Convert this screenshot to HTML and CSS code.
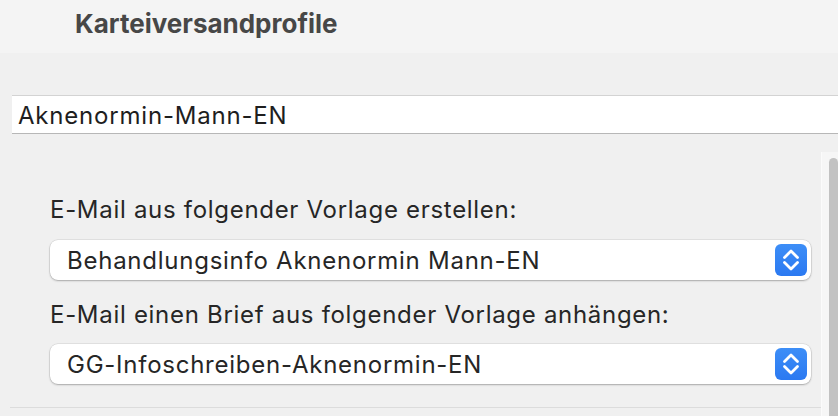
FILE: index.html
```html
<!DOCTYPE html>
<html lang="de">
<head>
    <meta charset="UTF-8">
    <title>Karteiversandprofile</title>
    <link rel="stylesheet" href="styles.css">
</head>
<body>
    <div class="header">
        <h1>Karteiversandprofile</h1>
    </div>

    <div class="main">
        <div class="name-field">Aknenormin-Mann-EN</div>

        <div class="panel">
            <div class="form">
                <div class="label">E-Mail aus folgender Vorlage erstellen:</div>
                <div class="popup">
                    <span>Behandlungsinfo Aknenormin Mann-EN</span>
                    <span class="stepper">
                        <svg viewBox="0 0 32 32" width="32" height="32"><path d="M9.5 13.5 L16 7 L22.5 13.5 M9.5 18.5 L16 25 L22.5 18.5" /></svg>
                    </span>
                </div>

                <div class="label second">E-Mail einen Brief aus folgender Vorlage anhängen:</div>
                <div class="popup">
                    <span>GG-Infoschreiben-Aknenormin-EN</span>
                    <span class="stepper">
                        <svg viewBox="0 0 32 32" width="32" height="32"><path d="M9.5 13.5 L16 7 L22.5 13.5 M9.5 18.5 L16 25 L22.5 18.5" /></svg>
                    </span>
                </div>

                <div class="separator"></div>
            </div>
            <div class="scroller">
                <div class="thumb"></div>
            </div>
        </div>
    </div>
</body>
</html>
```

FILE: styles.css
```css
body {
    margin: 0;
    font-family: Inter, "Liberation Sans", sans-serif;
    color: #262626;
    background: #f0f0f0;
    overflow: hidden;
}
.header {
    height: 53px;
    background: #f4f4f4;
    padding-left: 75px;
    box-sizing: border-box;
}
h1 {
    margin: 0;
    padding-top: 9px;
    font-size: 26px;
    line-height: 30px;
    font-weight: 700;
    color: #474747;
}
.main {
    background: #f0f0f0;
    padding-top: 42px;
}
.name-field {
    margin-left: 12px;
    height: 37px;
    background: white;
    border-top: 1px solid #d3d3d3;
    border-bottom: 1px solid #b7b7b7;
    padding-left: 6px;
    font-size: 24px;
    letter-spacing: 0.8px;
    line-height: 39px;
    color: #1e1e1e;
}
.panel {
    display: flex;
    margin-top: 18px;
}
.form {
    flex: 1;
    padding: 44px 10px 8px 50px;
}
.label {
    font-size: 24px;
    letter-spacing: 0.7px;
    line-height: 28px;
    margin-bottom: 16px;
}
.label.second {
    margin-top: 21px;
    margin-bottom: 15px;
}
.popup {
    height: 40px;
    background: white;
    border-radius: 8px;
    box-shadow: 0 0 0 0.5px rgba(0,0,0,0.12), 0 1px 2px rgba(0,0,0,0.25);
    display: flex;
    align-items: center;
    justify-content: space-between;
    padding: 0 4px 0 17px;
    font-size: 24px;
    letter-spacing: 0.75px;
}
.stepper {
    width: 32px;
    height: 32px;
    border-radius: 6px;
    background: linear-gradient(#3d8ef7, #2b79f1);
    display: flex;
}
.stepper path {
    fill: none;
    stroke: white;
    stroke-width: 2.8;
    stroke-linecap: round;
    stroke-linejoin: round;
}
.separator {
    margin: 23px -10px 0 -40px;
    height: 1px;
    background: #dcdcdc;
}
.scroller {
    width: 17px;
    border-left: 1px solid #fbfbfb;
    background: #f6f6f6;
    padding-top: 6px;
    padding-left: 7px;
    box-sizing: border-box;
    display: flex;
}
.thumb {
    flex: 1;
    background: #c2c2c2;
    border-radius: 5px 5px 0 0;
}
```
